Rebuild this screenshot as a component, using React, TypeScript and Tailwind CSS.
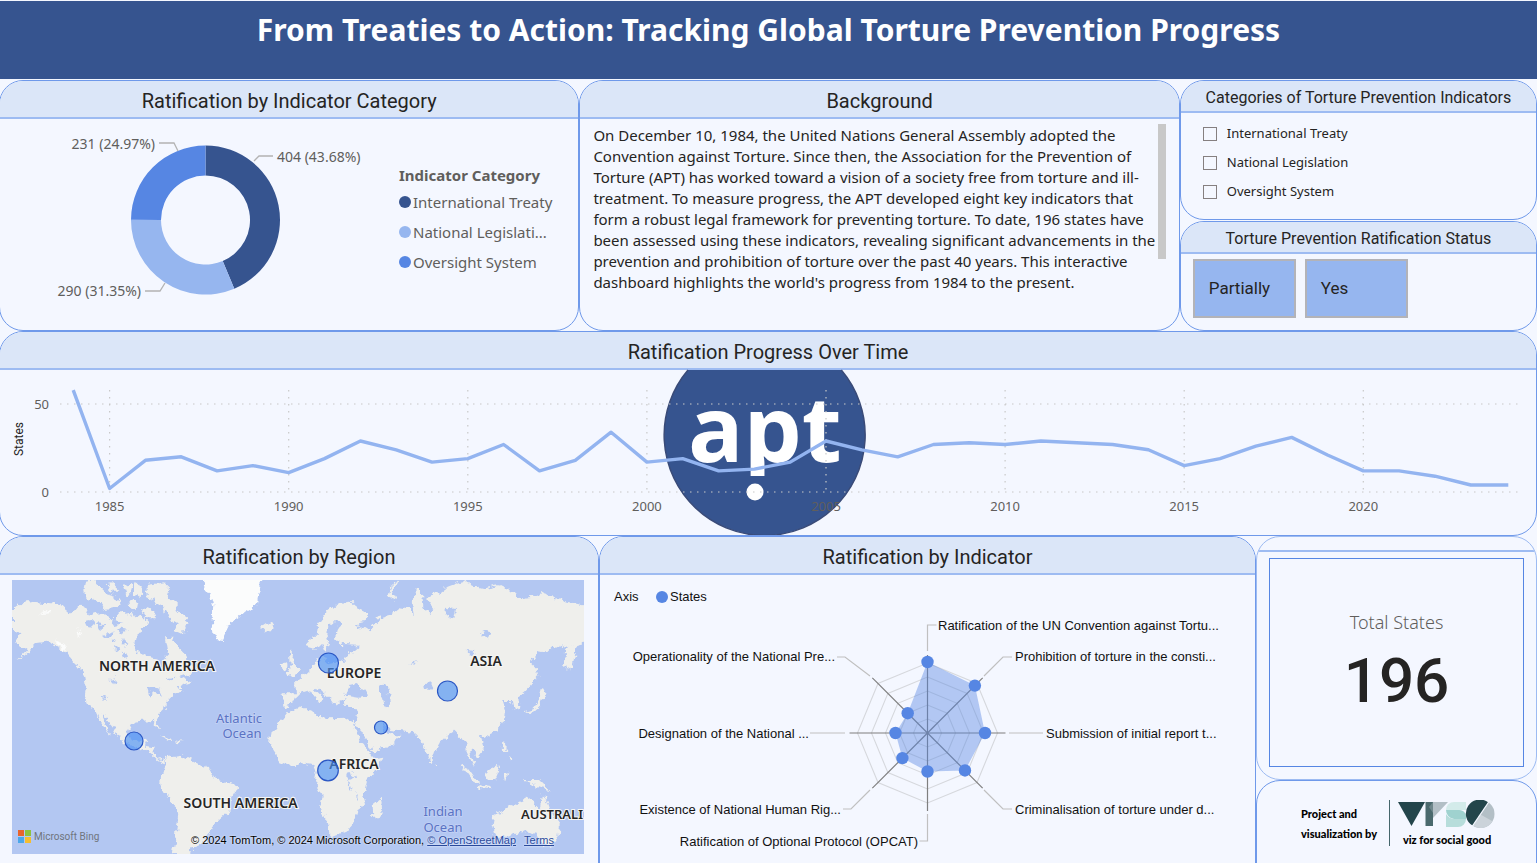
import type { ReactNode } from 'react';

const values = [
  57, 2, 18, 20, 12, 15, 11, 19, 29, 24, 17, 19, 27, 12, 18, 34, 17, 19, 12, 13, 17, 29, 24, 20, 27, 28, 27, 29, 28,
  27, 24, 15, 19, 26, 31, 21, 12, 12, 9, 4, 4,
];

const din = 'font-[Roboto,sans-serif]';

function Panel({ title, children, small, className = '' }: { title: string; children: ReactNode; small?: boolean; className?: string }) {
  return (
    <section className={`flex min-w-0 flex-col overflow-hidden rounded-3xl border border-[#6f99ea] bg-[#f4f7ff] ${className}`}>
      <h2
        className={`${din} flex shrink-0 items-center justify-center border-b-2 border-[#9dbbf2] bg-[#dbe6f8] text-[#252423] ${
          small ? 'h-8 pt-[3px] text-base' : 'h-[38px] pt-1 text-xl'
        }`}
      >
        {title}
      </h2>
      {children}
    </section>
  );
}

function point(cx: number, cy: number, r: number, deg: number) {
  const a = (deg * Math.PI) / 180;
  return `${(cx + r * Math.sin(a)).toFixed(2)},${(cy - r * Math.cos(a)).toFixed(2)}`;
}

function slice(from: number, to: number) {
  const large = to - from > 180 ? 1 : 0;
  return `M${point(205.5, 101, 74.5, from)} A74.5,74.5 0 ${large} 1 ${point(205.5, 101, 74.5, to)} L${point(205.5, 101, 44.5, to)} A44.5,44.5 0 ${large} 0 ${point(205.5, 101, 44.5, from)} Z`;
}

function Donut() {
  return (
    <svg viewBox="0 0 390 211" className="w-[390px] shrink-0" role="img" aria-label="Ratification by Indicator Category">
      <path d={slice(0, 157.25)} fill="#36548f" />
      <path d={slice(157.25, 270.1)} fill="#96b6ef" />
      <path d={slice(270.1, 360)} fill="#5686e3" />
      <g fill="none" stroke="#b3b3b3" strokeWidth="1.3">
        <path d="M159,24h15l4,8" />
        <path d="M254,42l5,-5h14" />
        <path d="M145,172h15l5,-8" />
      </g>
      <g fill="#605e5c" className="font-['Noto_Sans',sans-serif] text-[14px]">
        <text x="155" y="30" textAnchor="end">231 (24.97%)</text>
        <text x="277" y="43">404 (43.68%)</text>
        <text x="141" y="177" textAnchor="end">290 (31.35%)</text>
      </g>
    </svg>
  );
}

function Legend() {
  return (
    <div className="pt-11 font-['Noto_Sans',sans-serif] text-[15px] text-[#605e5c]">
      <h3 className="h-6 font-bold leading-6">Indicator Category</h3>
      <ul>
        <li className="flex h-[30px] items-center gap-[2px]"><i className="size-3 rounded-full bg-[#36548f]" />International Treaty</li>
        <li className="flex h-[30px] items-center gap-[2px]"><i className="size-3 rounded-full bg-[#96b6ef]" />National Legislati...</li>
        <li className="flex h-[30px] items-center gap-[2px]"><i className="size-3 rounded-full bg-[#5686e3]" />Oversight System</li>
      </ul>
    </div>
  );
}

function Progress() {
  const line = values.map((v, i) => `${(73.8 + i * 35.82).toFixed(1)},${(122 - v * 1.76).toFixed(1)}`).join(' ');
  const years = [1985, 1990, 1995, 2000, 2005, 2010, 2015, 2020];
  return (
    <svg viewBox="0 0 1536 165" className="block w-full overflow-visible" role="img" aria-label="Ratification Progress Over Time">
      <path d="M688,0A100.500,100.500 0 1 0 841.300,0" fill="#36548f" stroke="#3a4b78" strokeWidth="1.5" />
      <text x="688" y="92" fill="#ffffff" className="font-['Open_Sans',sans-serif] text-[92px] font-bold">apt</text>
      <rect x="744" y="106" width="24" height="20" fill="#36548f" />
      <circle cx="755" cy="122" r="8.5" fill="#ffffff" />
      <g stroke="#c8c8c8" strokeWidth="1.2" strokeDasharray="1.5 5.5" strokeLinecap="butt" fill="none">
        <path d="M60,34H1520M60,122H1520" />
        {years.map((y) => (
          <path key={y} d={`M${109.6 + (y - 1985) * 35.82},20V122`} />
        ))}
      </g>
      <polyline points={line} fill="none" stroke="#93b4f0" strokeWidth="3.4" strokeLinejoin="round" strokeLinecap="square" />
      <g fill="#605e5c" className="font-['Noto_Sans',sans-serif] text-[13px]">
        <text x="49" y="39" textAnchor="end">50</text>
        <text x="49" y="127" textAnchor="end">0</text>
        {years.map((y) => (
          <text key={y} x={109.6 + (y - 1985) * 35.82} y="141" textAnchor="middle">{y}</text>
        ))}
      </g>
      <text transform="translate(23 69) rotate(-90)" textAnchor="middle" fill="#252423" className="font-[Roboto,sans-serif] text-[12px]">States</text>
    </svg>
  );
}

const land = [
  'M36,225L60,205 100,200 150,205 190,212 215,235 232,215 250,212 270,240 300,235 330,250 345,270 380,262 400,250 425,240 445,262 425,290 410,300 405,330 412,350 440,365 470,370 475,395 488,400 490,375 505,360 500,340 495,310 515,308 530,330 550,350 565,380 590,400 575,415 545,425 575,440 530,455 545,465 520,480 500,500 495,520 475,540 468,560 480,582 470,580 455,555 420,558 395,565 383,590 390,612 420,625 432,612 445,610 435,635 460,640 462,660 475,675 495,668 500,672 490,685 470,675 450,655 430,645 400,630 365,620 350,600 340,580 325,560 305,540 330,600 300,560 285,525 265,505 255,480 260,450 255,420 235,400 215,370 200,350 170,335 140,320 110,325 90,345 60,370 50,375 80,345 60,330 45,315 60,295 40,280 36,275Z',
  'M255,140L280,135 300,155 320,175 345,182 362,205 350,222 315,225 300,205 275,192 262,188 250,165Z',
  'M320,150L345,148 358,170 335,170Z',
  'M370,150L395,140 400,165 380,180Z',
  'M405,140L425,150 422,190 405,180Z',
  'M385,195L415,200 410,225 388,220Z',
  'M345,238L395,230 410,252 375,265 345,258Z',
  'M440,150L490,142 510,165 505,190 530,210 530,225 545,240 572,262 555,275 552,300 520,285 530,265 505,250 490,215 465,200 440,185Z',
  'M425,220L455,225 465,250 440,250Z',
  'M500,670L545,662 575,675 600,688 625,700 640,725 670,738 700,745 712,758 700,780 690,800 685,830 660,850 640,870 630,895 615,915 600,930 575,940 570,960 518,960 525,920 530,880 535,840 530,815 510,800 490,765 480,740 490,715 498,690Z',
  'M480,598L515,612 512,618 485,605ZM520,615L545,620 535,625Z',
  'M780,275L800,262 822,270 820,282 795,293Z',
  'M870,345L882,362 878,380 897,408 885,420 862,416 872,395ZM845,385L862,382 862,405 848,410Z',
  'M845,475L888,475 885,445 905,428 940,395 955,370 970,365 985,385 1030,378 1050,355 1065,345 1080,332 1025,330 1005,310 1010,285 1025,262 1008,255 985,275 982,300 990,325 975,352 965,325 945,345 925,340 920,322 950,300 955,265 985,225 1015,205 1050,200 1075,222 1102,235 1100,258 1070,262 1080,288 1095,275 1100,290 1120,270 1140,250 1175,240 1200,220 1230,225 1245,240 1238,200 1245,165 1265,165 1270,215 1285,240 1300,220 1275,185 1290,180 1320,170 1340,155 1380,140 1400,135 1410,150 1450,160 1500,150 1530,165 1560,190 1600,185 1630,175 1660,185 1700,200 1760,212 1760,325 1720,330 1680,340 1660,330 1640,350 1615,345 1590,380 1610,400 1615,425 1595,450 1575,470 1555,485 1558,520 1542,525 1535,495 1510,495 1515,530 1512,555 1495,585 1465,600 1440,605 1452,645 1435,668 1420,650 1410,645 1425,700 1405,665 1395,620 1380,610 1360,590 1345,600 1320,625 1305,650 1295,685 1280,660 1268,615 1240,590 1170,582 1145,565 1150,590 1197,600 1185,625 1120,655 1110,630 1080,590 1062,562 1070,545 1075,520 1040,518 1030,505 1040,492 1015,500 1005,512 990,490 970,470 950,455 945,463 970,488 960,507 945,488 930,465 900,475 885,490 875,510 850,515Z',
  'M862,532L900,520 940,520 950,545 990,550 1040,548 1060,562 1080,600 1110,655 1120,670 1150,665 1135,700 1100,740 1090,780 1095,800 1075,830 1065,860 1040,890 1000,905 985,890 970,830 960,805 965,780 945,740 950,715 940,690 900,685 870,692 840,680 820,650 810,620 815,590 840,560Z',
  'M1118,812L1145,790 1148,810 1135,850 1120,850Z',
  'M1480,840L1520,820 1550,800 1575,785 1595,790 1600,810 1620,820 1625,785 1635,785 1650,830 1680,870 1675,905 1650,935 1630,930 1610,900 1570,890 1520,905 1485,905 1475,870Z',
  'M1383,690L1405,700 1437,745 1425,748ZM1435,750L1472,756 1470,762 1438,758ZM1455,715L1490,690 1500,700 1485,735 1460,735ZM1510,715L1525,712 1515,740ZM1568,735L1620,735 1652,765 1620,760 1590,750Z',
  'M1510,625L1520,630 1518,650 1508,640ZM1528,660L1540,670 1530,682Z',
  'M1572,528L1600,520 1615,500 1625,465 1637,470 1620,512 1590,538Z',
  'M1692,385L1695,350 1720,320 1745,310 1730,340 1715,400 1700,410Z',
  'M1163,185L1180,140 1192,137 1175,170 1185,195Z',
  'M1303,682L1310,686 1306,692Z',
];

const water = [
  'M1035,482L1045,450 1070,447 1080,455 1105,470 1110,482 1070,488Z',
  'M1140,455L1160,447 1168,480 1170,520 1148,512 1140,480Z',
  'M1058,560L1085,590 1115,640 1108,650 1075,605Z',
  'M440,455L475,460 485,480 460,475 450,485Z',
  'M300,490L325,485 315,495Z',
  'M260,260L285,255 280,275 265,272ZM310,300L345,290 325,310ZM345,330L360,340 350,350ZM330,435L345,430 340,445Z',
  'M290,265L320,268 300,285ZM350,280L385,285 360,295ZM330,320L340,310 345,325ZM370,310L385,325 372,335ZM365,350L385,360 372,368ZM500,430L530,425 515,440Z',
  'M1270,450L1300,448 1290,465 1272,462ZM1340,215L1365,220 1360,250 1340,245ZM1450,290L1470,295 1465,310 1452,305ZM1400,345L1425,348 1415,362ZM1230,385L1245,375 1250,380Z',
  'M1040,720L1060,715 1065,728 1048,735ZM1042,735L1048,760 1055,765 1046,735ZM1068,770L1074,795 1070,795Z',
];

function RegionMap() {
  const bubbles = [
    [122, 161, 9],
    [316.5, 83, 10],
    [435.5, 111, 10],
    [369, 147.5, 6.5],
    [316, 190.5, 10.3],
  ];
  return (
    <div className="relative ml-3 mr-[14px] mt-[5px] overflow-hidden">
      <svg viewBox="0 0 572 274" className="block w-full" role="img" aria-label="Ratification by Region">
        <defs>
          <filter id="coast" x="0" y="0" width="100%" height="100%">
            <feTurbulence type="fractalNoise" baseFrequency="0.15" numOctaves="3" seed="4" result="noise" />
            <feDisplacementMap in="SourceGraphic" in2="noise" scale="9" xChannelSelector="R" yChannelSelector="G" />
          </filter>
        </defs>
        <rect width="572" height="274" fill="#b3c7f2" />
        <g filter="url(#coast)">
          <rect x="-20" y="-20" width="612" height="314" fill="#b3c7f2" />
          <g transform="scale(0.33333) translate(-36 -135)">
            {land.map((d) => <path key={d} d={d} fill="#efefec" />)}
            <path d="M600,120L790,120 775,180 770,210 735,230 720,245 690,265 680,285 665,318 650,315 640,290 635,250 640,215 630,180 615,160Z" fill="#fbfcfc" />
            <path d="M120,235L160,220 150,232ZM160,315L200,330 195,345ZM232,280L242,305 236,305Z" fill="#fbfcfc" />
            {water.map((d) => <path key={d} d={d} fill="#b3c7f2" />)}
          </g>
        </g>
        <g className="font-['Noto_Sans',sans-serif] text-[14px] font-semibold" fill="#262626" stroke="#f6f6f4" strokeWidth="2" paintOrder="stroke">
          <text x="145" y="91" textAnchor="middle">NORTH AMERICA</text>
          <text x="228.5" y="228" textAnchor="middle">SOUTH AMERICA</text>
          <text x="342" y="98" textAnchor="middle">EUROPE</text>
          <text x="474" y="86" textAnchor="middle">ASIA</text>
          <text x="342" y="189" textAnchor="middle">AFRICA</text>
          <text x="571" y="239" textAnchor="end" className="text-[13px]">AUSTRALI</text>
        </g>
        <g className="font-['Noto_Sans',sans-serif] text-[13px]" fill="#5a73c4" stroke="#c3d2f5" strokeWidth="1.5" paintOrder="stroke">
          <text x="227" y="143" textAnchor="middle">Atlantic</text>
          <text x="230" y="158" textAnchor="middle">Ocean</text>
          <text x="431" y="236" textAnchor="middle">Indian</text>
          <text x="431" y="252" textAnchor="middle">Ocean</text>
        </g>
        {bubbles.map(([x, y, r]) => (
          <circle key={x} cx={x} cy={y} r={r} fill="#4a90f5" fillOpacity="0.65" stroke="#2b57c4" strokeWidth="1.2" />
        ))}
      </svg>
      <div className="absolute bottom-[11px] left-[6px] flex items-center gap-[3px] font-[Roboto,sans-serif] text-[10px] leading-3 text-[#70757d]">
        <span className="grid grid-cols-2 gap-px">
          <i className="size-[6px] bg-[#e8642c]" />
          <i className="size-[6px] bg-[#8cc23f]" />
          <i className="size-[6px] bg-[#4ba7ea]" />
          <i className="size-[6px] bg-[#f5bd2f]" />
        </span>
        Microsoft Bing
      </div>
      <p className="absolute bottom-[6px] right-[30px] whitespace-nowrap font-['Liberation_Sans',sans-serif] text-[11px] leading-4 text-black [text-shadow:0_0_2px_white]">
        © 2024 TomTom, © 2024 Microsoft Corporation,{' '}
        <a href="#osm" className="text-[#2a4a9c] underline">© OpenStreetMap</a>
        <a href="#terms" className="ml-2 text-[#2a4a9c] underline">Terms</a>
      </p>
    </div>
  );
}

function Radar() {
  const cx = 327.5;
  const cy = 158;
  const radii = [71, 67, 57.5, 53, 38.5, 35.5, 32, 28];
  const dots = radii.map((r, i) => point(cx, cy, r, i * 45));
  return (
    <svg viewBox="0 0 655 290" className="block w-full" role="img" aria-label="Ratification by Indicator">
      <g fill="none" stroke="#d6d8dd" strokeWidth="1.1">
        {[14, 28, 42, 56, 70].map((r) => (
          <polygon key={r} points={radii.map((_, i) => point(cx, cy, r, i * 45)).join(' ')} />
        ))}
      </g>
      <g stroke="#7f7f7f" strokeWidth="1.2">
        {radii.map((_, i) => (
          <path key={i} d={`M${cx},${cy}L${point(cx, cy, 78, i * 45)}`} />
        ))}
      </g>
      <polygon points={dots.join(' ')} fill="#5686e3" fillOpacity="0.42" />
      {dots.map((p) => {
        const [x, y] = p.split(',');
        return <circle key={p} cx={x} cy={y} r="6.2" fill="#5686e3" />;
      })}
      <g fill="none" stroke="#c0c0c0" strokeWidth="1.2">
        <path d="M327.500,76V50h9" />
        <path d="M384,101l19,-19h9" />
        <path d="M409,158h34" />
        <path d="M384,215l19,19h9" />
        <path d="M327.500,239v27h-8" />
        <path d="M270,215l-19,19h-8" />
        <path d="M245,158h-35" />
        <path d="M270,101l-25,-19h-8" />
      </g>
      <g fill="#111111" className="font-['Liberation_Sans',sans-serif] text-[13px]">
        <text x="14" y="26">Axis</text>
        <circle cx="62" cy="22" r="6" fill="#5686e3" />
        <text x="70" y="26">States</text>
        <text x="338" y="55">Ratification of the UN Convention against Tortu...</text>
        <text x="415" y="86">Prohibition of torture in the consti...</text>
        <text x="446" y="163">Submission of initial report t...</text>
        <text x="415" y="239">Criminalisation of torture under d...</text>
        <text x="318" y="271" textAnchor="end">Ratification of Optional Protocol (OPCAT)</text>
        <text x="241" y="239" textAnchor="end">Existence of National Human Rig...</text>
        <text x="209" y="163" textAnchor="end">Designation of the National ...</text>
        <text x="235" y="86" textAnchor="end">Operationality of the National Pre...</text>
      </g>
    </svg>
  );
}

function Credits() {
  return (
    <div className="flex h-[107px] shrink-0 items-start justify-center gap-3 rounded-3xl border border-[#6f99ea] bg-[#f4f7ff] pl-1 pt-[19px] text-black">
      <p className="pt-1 font-[Lato,sans-serif] text-[11px] font-black leading-5">
        Project and
        <br />
        visualization by
      </p>
      <i className="h-[46px] w-px bg-[#45666b]" />
      <div className="-ml-1 flex flex-col items-center">
        <svg viewBox="0 0 98 30" className="h-[30px] w-[98px]" role="img" aria-label="VFSG">
          <path d="M0,2H27L13.500,26Z" fill="#23454b" />
          <path d="M27.500,2H35V26H27.500Z" fill="#4a696d" />
          <path d="M35,2H50L35,18Z" fill="#b3bfc6" />
          <path d="M35,2V13L31,7Z" fill="#6f878c" />
          <path d="M48,10a8,8 0 0 1 8,-8H68V10Z" fill="#d3ebea" />
          <path d="M48,10H61a7,7 0 0 1 7,9H56a9,9 0 0 1 -8,-9Z" fill="#9fd2cf" />
          <path d="M48,14q3,5 9,5H68a8,8 0 0 1 -8,8H48Z" fill="#b7dddb" />
          <circle cx="82.500" cy="14" r="14" fill="#b3bfc6" />
          <path d="M82.500,14.500L94.500,21.200A14,14 0 0 1 74.700,25.600Z" fill="#cbd3da" />
          <path d="M90.300,2.400A14,14 0 1 0 74.700,25.600Z" fill="#23454b" />
          <path d="M91.400,1L73.800,27" stroke="#f4f7ff" strokeWidth="1.3" />
        </svg>
        <p className="font-[Lato,sans-serif] text-[11px] font-black leading-5">viz for social good</p>
      </div>
    </div>
  );
}

export default function App() {
  return (
    <main className="flex h-screen min-h-[700px] flex-col overflow-hidden bg-[#f4f7ff]">
      <header className="mt-px flex h-[78px] shrink-0 justify-center bg-[#36548f] pt-[6px]">
        <h1 className="font-['Noto_Sans',sans-serif] text-[30px] font-bold leading-[46px] text-white">
          From Treaties to Action: Tracking Global Torture Prevention Progress
        </h1>
      </header>
      <div className="-ml-px mt-px grid shrink-0 grid-cols-[580fr_600fr_357fr]">
        <Panel title="Ratification by Indicator Category">
          <div className="flex">
            <Donut />
            <div className="pl-[9px]"><Legend /></div>
          </div>
        </Panel>
        <Panel title="Background">
          <div className="flex gap-px pl-[13px] pt-[5px]">
            <p className="w-[564px] pt-px font-['Noto_Sans',sans-serif] text-[15px] leading-[21px] text-[#252423]">
              On December 10, 1984, the United Nations General Assembly adopted the Convention against Torture. Since then,
              the Association for the Prevention of Torture (APT) has worked toward a vision of a society free from torture
              and ill-treatment. To measure progress, the APT developed eight key indicators that form a robust legal
              framework for preventing torture. To date, 196 states have been assessed using these indicators, revealing
              significant advancements in the prevention and prohibition of torture over the past 40 years. This
              interactive dashboard highlights the world's progress from 1984 to the present.
            </p>
            <div className="h-[135px] w-2 bg-[#c8c8c8]" />
          </div>
        </Panel>
        <div className="flex flex-col gap-px">
          <Panel title="Categories of Torture Prevention Indicators" small className="h-[140px]">
            <div className="flex flex-col pl-[22px] pt-[6px] font-['Noto_Sans',sans-serif] text-[13px] text-[#252423]">
              {['International Treaty', 'National Legislation', 'Oversight System'].map((name) => (
                <label key={name} className="flex h-[29px] items-center gap-[10px]">
                  <input type="checkbox" className="size-[14px] appearance-none border border-[#857f80] bg-transparent" />
                  {name}
                </label>
              ))}
            </div>
          </Panel>
          <Panel title="Torture Prevention Ratification Status" small className="flex-1">
            <div className={`${din} flex gap-[9px] px-3 pt-[5px] text-[17px] text-[#252423]`}>
              <button className="h-[59px] w-[103px] border-2 border-[#b3b3b8] bg-[#96b6ef] pl-[14px] text-left">Partially</button>
              <button className="h-[59px] w-[103px] border-2 border-[#b3b3b8] bg-[#96b6ef] pl-[14px] text-left">Yes</button>
            </div>
          </Panel>
        </div>
      </div>
      <Panel title="Ratification Progress Over Time" className="-ml-px shrink-0">
        <Progress />
      </Panel>
      <div className="-mb-6 -ml-px grid min-h-0 flex-1 grid-cols-[600fr_657fr_281fr]">
        <Panel title="Ratification by Region"><RegionMap /></Panel>
        <Panel title="Ratification by Indicator"><Radar /></Panel>
        <div className="flex flex-col">
          <div className="flex flex-1 flex-col overflow-hidden rounded-3xl border border-[#9dbbf2] px-3 pb-3 pt-[13px]">
            <div className="-mx-3 mb-[6px] h-[2px] shrink-0 bg-[#9dbbf2]" />
            <div className="flex flex-1 flex-col items-center justify-center border border-[#5686e3] pt-2">
              <p className="font-['Noto_Sans',sans-serif] text-lg font-light text-[#605e5c]">Total States</p>
              <p className={`${din} text-[62px] font-medium leading-[90px] text-[#252423]`}>196</p>
            </div>
          </div>
          <Credits />
        </div>
      </div>
    </main>
  );
}
